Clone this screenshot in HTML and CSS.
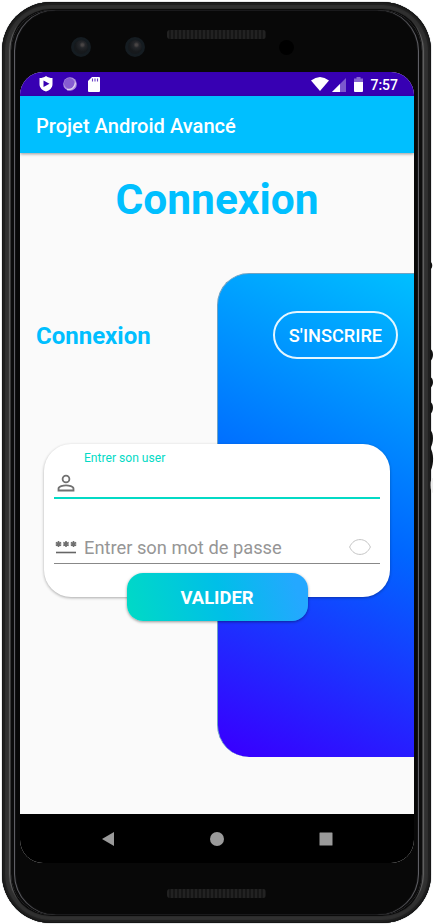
FILE: index.html
```html
<!DOCTYPE html>
<html lang="fr">
<head>
<meta charset="utf-8">
<title>Projet Android Avancé</title>
<link rel="stylesheet" href="styles.css">
</head>
<body>
<div class="stage">
<svg class="side-keys" viewBox="0 0 6 250" aria-hidden="true">
  <path d="M0 17c3 0 3 7 0 7M0 81h1v4H0M0 104c4 1 4 10 0 12M0 132c4 1 4 9 0 11M0 157c4 1 4 10 0 12M0 185c4 2 4 14 0 18M0 203c4 4 4 16 1 22" />
  <path class="gap" d="M3 233q-2.500 0-2.500 7t2.500 8z" />
</svg>
<div class="device">
  <div class="rim">
    <div class="bezel-top">
      <i class="lens"></i><i class="lens"></i><i class="speaker"></i><i class="sensor"></i>
    </div>
    <main class="screen">
      <div class="status">
        <svg class="s-shield" viewBox="0 0 14 16"><path fill="#fff" d="M7 0c2 1.500 4 2 6.500 2v6c0 4-3 6.500-6.500 7.500C3.500 14.500.5 12 .5 8V2C3 2 5 1.500 7 0z"/><path fill="#3700b3" d="M4.500 4.500v6.500l6-3.200z"/></svg>
        <svg class="s-sync" viewBox="0 0 14 14"><circle cx="7" cy="7" r="6.800" fill="#ad91dd"/><circle cx="6.300" cy="6.300" r="5.300" fill="#865cd1"/><path d="M4 12.500c5 1 8-3 8.500-7" fill="none" stroke="#ddd0f2" stroke-width="1.300"/></svg>
        <svg class="s-card" viewBox="0 0 12 15"><path fill="#fff" d="M4 0h7a1 1 0 0 1 1 1v13a1 1 0 0 1-1 1H1a1 1 0 0 1-1-1V4z"/><path d="M4.500 1.500v3M7 1.500v3M9.500 1.500v3" stroke="#3700b3" stroke-width="1.100" opacity=".75"/></svg>
        <span class="grow"></span>
        <svg class="s-wifi" viewBox="0 0 18 14"><path fill="#fff" d="M0 3.500Q9-3.500 18 3.500L9 14z"/></svg>
        <svg class="s-cell" viewBox="0 0 14 14"><path fill="#fff" opacity=".35" d="M14 0v14H0z"/><path fill="#fff" d="M8 6v8H0z"/></svg>
        <svg class="s-batt" viewBox="0 0 9 15"><path fill="#fff" opacity=".4" d="M2.500 0h4v1.500H9V5H0V1.500h2.500z"/><path fill="#fff" d="M0 5h9v9a1 1 0 0 1-1 1H1a1 1 0 0 1-1-1z"/></svg>
        <span class="clock">7:57</span>
      </div>
      <header class="appbar">Projet Android Avancé</header>
      <section class="content">
        <h1>Connexion</h1>
        <div class="body">
          <div class="switch">
            <h2>Connexion</h2>
            <div class="panel"><button class="signup">S'INSCRIRE</button></div>
          </div>
          <form class="card">
            <label class="float">Entrer son user</label>
            <div class="field user">
              <svg viewBox="0 0 18 18"><g fill="none" stroke="#707070" stroke-width="1.800"><circle cx="9" cy="5" r="3.400"/><path d="M1.500 16.500v-1.800c0-2.300 4.700-3.400 7.500-3.400s7.500 1.100 7.500 3.400v1.800z"/></g></svg>
            </div>
            <div class="field pass">
              <svg viewBox="0 0 22 14"><path stroke="#707070" stroke-width="1.600" d="M3.500 1v6M.8 2.500l5.400 3M6.200 2.500L.8 5.500M11 1v6M8.300 2.500l5.400 3M13.700 2.500L8.300 5.500M18.500 1v6M15.800 2.500l5.400 3M21.200 2.500l-5.400 3"/><path stroke="#666" stroke-width="1.600" d="M1 12.500h20"/></svg>
              <span>Entrer son mot de passe</span>
              <svg class="eye" viewBox="0 0 22 16"><path fill="none" stroke="#c4c4c4" stroke-width="1" d="M.6 8C3 3 6.500.6 11 .6S19 3 21.400 8C19 13 15.500 15.400 11 15.400S3 13 .6 8z"/></svg>
            </div>
            <button type="button" class="submit">VALIDER</button>
          </form>
        </div>
      </section>
      <nav class="nav">
        <svg viewBox="0 0 14 14"><path d="M13 0v14L1 7z"/></svg>
        <svg viewBox="0 0 14 14"><circle cx="7" cy="7" r="7"/></svg>
        <svg viewBox="0 0 14 14"><rect x=".5" y=".5" width="13" height="13" rx=".5"/></svg>
      </nav>
    </main>
    <div class="bezel-bottom"><i class="speaker"></i></div>
  </div>
</div>
</div>
</body>
</html>
```
FILE: styles.css
```css
* { box-sizing: border-box; }
body { margin: 0; background: #fff; font-family: Roboto, "Liberation Sans", sans-serif; }
svg { display: block; flex: none; }
button { font-family: inherit; padding: 0; }
h1, h2 { margin: 0; color: #00bfff; font-weight: 700; }
.stage { position: relative; width: 437px; height: 924px; padding: 2px 0 0 2px; overflow: hidden; }
.side-keys { position: absolute; z-index: 1; left: 430px; top: 245px; width: 6px; height: 250px; fill: #111; }
.side-keys .gap { fill: #eee; }
.device {
  position: relative; width: 429px; height: 921px; border-radius: 49px; padding: 8px 12px;
  background: #080808;
  box-shadow: inset 0 0 0 1px #161616, inset 0 0 1px 3px #1f1f1f, inset 0 0 1px 7px #303030,
    inset 8.5px 0 1px #6a6a6a, inset -8.5px 0 1px #6a6a6a, 0 0 1px #1a2730;
}
.rim {
  height: 905px; margin: 0 -3px; padding: 0 9px; border-radius: 41px; background: #080808;
  box-shadow: inset 3px 0 #0c0c0c, inset -3px 0 #0c0c0c, inset 4px 0 1px #6a6a70, inset -4px 0 1px #6a6a70;
}
.bezel-top { height: 62px; display: flex; align-items: flex-start; padding: 27px 0 0 51px; }
.lens { width: 20px; height: 20px; margin-right: 34px; border-radius: 50%; border: 3px solid #151c21; background: radial-gradient(circle at 60% 35%, #484444 0 1px, #24262a 3px, #16191c 7px); }
.speaker { display: block; width: 99px; height: 9px; border-radius: 3px; background: repeating-linear-gradient(90deg, #222 0 2px, #161616 2px 4px); }
.bezel-top .speaker { margin: -7px 13px 0 -12px; }
.sensor { width: 15px; height: 15px; margin-top: 3px; border-radius: 50%; background: #000; }
.screen { width: 394px; height: 791px; border-radius: 23px; overflow: hidden; background: #fafafa; display: flex; flex-direction: column; }
.status { height: 24px; flex: none; background: #3700b3; display: flex; align-items: center; padding: 0 16px 0 19px; color: #fff; }
.s-shield { width: 14px; height: 16px; }
.s-sync { width: 14px; height: 14px; margin-left: 10px; }
.s-card { width: 12px; height: 15px; margin-left: 11px; }
.grow { flex: 1; }
.s-wifi { width: 18px; height: 14px; }
.s-cell { width: 14px; height: 14px; margin: 2px 8px 0 3px; }
.s-batt { width: 9px; height: 15px; margin-right: 7px; }
.clock { font-size: 14px; font-weight: 500; line-height: 24px; padding-top: 2px; }
.appbar { position: relative; height: 57px; flex: none; background: #00bfff; color: #fff; font-size: 20.100px; font-weight: 500; line-height: 60px; padding-left: 16px; box-shadow: 0 1px 3px rgba(0,0,0,.4); }
.content { height: 661px; flex: none; }
h1 { height: 120px; padding-top: 21px; font-size: 42.500px; line-height: 52px; text-align: center; }
.body { display: grid; height: 484px; }
.switch, .card { grid-area: 1 / 1; }
.switch { display: flex; justify-content: space-between; }
h2 { padding: 48px 0 0 16px; font-size: 24px; line-height: 30px; }
.panel { width: 197px; height: 484px; border-radius: 32px 0 0 32px; border: solid #6fa3c4; border-width: 1px 0 0 1px; background: linear-gradient(204deg, #00bfff 0%, #0066ff 50%, #3700ff 98%); padding: 37px 16px 0 0; display: flex; justify-content: flex-end; align-items: flex-start; }
.signup { width: 125px; height: 48px; border: 2px solid #e4f6ff; border-radius: 24px; background: none; color: #fff; font-size: 18.200px; font-weight: 500; }
.card { position: relative; width: 346px; height: 153px; margin: 171px 0 0 24px; border-radius: 27px; background: #fff; box-shadow: 0 1px 3px rgba(0,0,0,.32); padding: 6px 10px 0; display: flex; flex-direction: column; }
.float { flex: none; height: 16px; padding-left: 30px; color: #03dac5; font-size: 12.100px; line-height: 16px; }
.field { flex: none; display: flex; align-items: center; }
.user { height: 33px; border-bottom: 2px solid #03dac5; }
.user svg { width: 18px; height: 18px; margin: 3px 0 0 3px; }
.pass { height: 65px; padding: 32px 9px 0 1px; border-bottom: 1px solid #888; color: #969696; font-size: 18.300px; }
.pass svg { width: 22px; height: 14px; }
.pass span { flex: 1; margin-left: 7px; white-space: nowrap; }
.pass .eye { width: 22px; height: 16px; }
.submit { flex: none; align-self: center; width: 181px; height: 48px; margin-top: 9px; border: 0; border-radius: 16px; background: linear-gradient(75deg, #00dac5, #00bfe8 52%, #24a8ff 92%); color: #fff; font-size: 18.400px; font-weight: 700; box-shadow: 0 1px 3px rgba(0,0,0,.4); }
.nav { height: 49px; flex: none; background: #000; display: flex; justify-content: center; align-items: center; gap: 95px; fill: #9a9a9a; }
.nav svg { width: 14px; height: 14px; }
.bezel-bottom { height: 52px; display: flex; justify-content: center; padding-top: 26px; }
```
